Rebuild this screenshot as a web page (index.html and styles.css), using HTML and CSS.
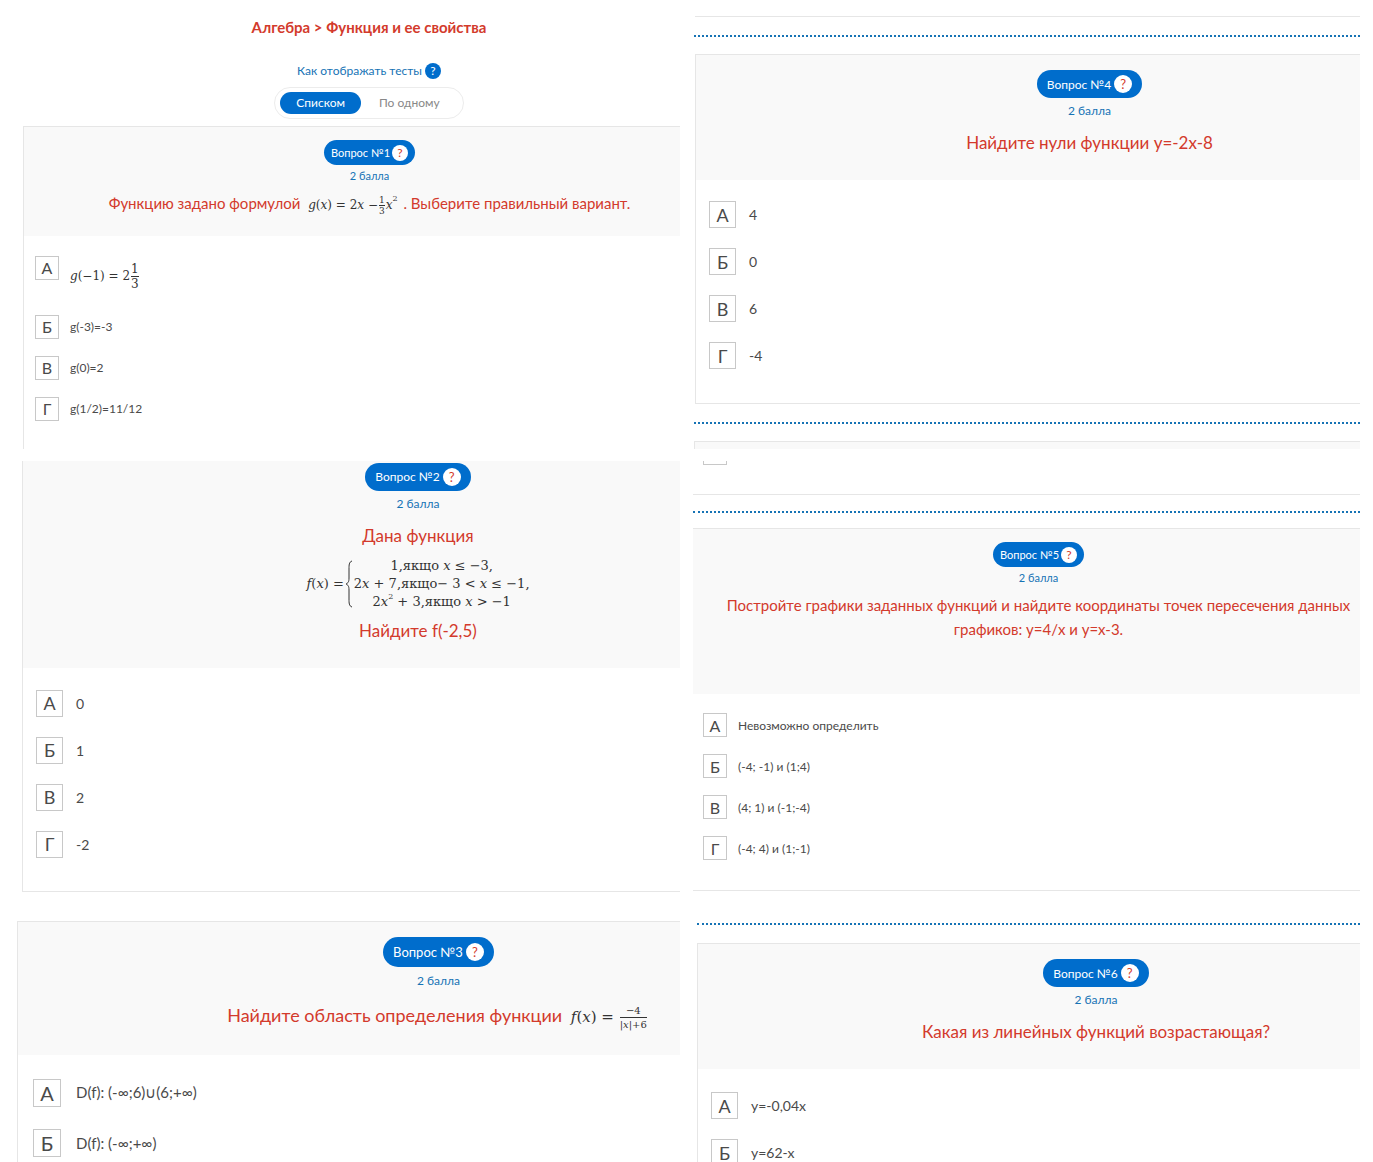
FILE: index.html
```html
<!DOCTYPE html>
<html lang="ru">
<head>
    <meta charset="UTF-8">
    <meta name="viewport" content="width=device-width, initial-scale=1.0">
    <title>Алгебра - Функция и ее свойства</title>
    <link rel="stylesheet" href="styles.css">
</head>
<body>
<main class="page">
    <div class="column">
        <header class="top">
            <h1>Алгебра &gt; Функция и ее свойства</h1>
            <div class="view-label">
                Как отображать тесты
                <button class="help help-blue" type="button">?</button>
            </div>
            <div class="toggle">
                <button class="toggle-item active" type="button">Списком</button>
                <button class="toggle-item" type="button">По одному</button>
            </div>
        </header>

        <section class="question small q1">
            <div class="question-head">
                <div class="badge">Вопрос №1 <button class="help" type="button">?</button></div>
                <div class="points">2 балла</div>
                <h2>Функцию задано формулой
                    <span class="formula"><i>g</i>(<i>x</i>) = 2<i>x</i> −<span class="frac"><span>1</span><span>3</span></span><i>x</i><sup>2</sup></span>
                    . Выберите правильный вариант.</h2>
            </div>
            <div class="answers">
                <button class="answer answer-tall" type="button"><span class="letter">А</span><span class="formula"><i>g</i>(−1) = 2<span class="frac frac-big"><span>1</span><span>3</span></span></span></button>
                <button class="answer" type="button"><span class="letter">Б</span><span>g(-3)=-3</span></button>
                <button class="answer" type="button"><span class="letter">В</span><span>g(0)=2</span></button>
                <button class="answer" type="button"><span class="letter">Г</span><span>g(1/2)=11/12</span></button>
            </div>
        </section>

        <section class="question medium q2">
            <div class="question-head">
                <div class="badge">Вопрос №2 <button class="help" type="button">?</button></div>
                <div class="points">2 балла</div>
                <h2>Дана функция</h2>
                <div class="formula system">
                    <span><i>f</i>(<i>x</i>) =</span>
                    <svg class="brace" viewBox="0 0 8 48" width="8" height="48">
                        <path d="M7 1C4 2 4 5 4 9v9c0 4-1 5-3 6 2 1 3 2 3 6v9c0 4 0 7 3 8"/>
                    </svg>
                    <div class="cases">
                        <span>1,якщо <i>x</i> ≤ −3,</span>
                        <span>2<i>x</i> + 7,якщо− 3 &lt; <i>x</i> ≤ −1,</span>
                        <span>2<i>x</i><sup>2</sup> + 3,якщо <i>x</i> &gt; −1</span>
                    </div>
                </div>
                <h2>Найдите f(-2,5)</h2>
            </div>
            <div class="answers">
                <button class="answer" type="button"><span class="letter">А</span><span>0</span></button>
                <button class="answer" type="button"><span class="letter">Б</span><span>1</span></button>
                <button class="answer" type="button"><span class="letter">В</span><span>2</span></button>
                <button class="answer" type="button"><span class="letter">Г</span><span>-2</span></button>
            </div>
        </section>

        <section class="question large q3">
            <div class="question-head">
                <div class="badge">Вопрос №3 <button class="help" type="button">?</button></div>
                <div class="points">2 балла</div>
                <h2>Найдите область определения функции
                    <span class="formula"><i>f</i>(<i>x</i>) = <span class="frac"><span>−4</span><span>|<i>x</i>|+6</span></span></span></h2>
            </div>
            <div class="answers">
                <button class="answer" type="button"><span class="letter">А</span><span>D(f): (-∞;6)∪(6;+∞)</span></button>
                <button class="answer" type="button"><span class="letter">Б</span><span>D(f): (-∞;+∞)</span></button>
            </div>
        </section>
    </div>

    <div class="column">
        <div class="panel-end"></div>
        <hr class="dots">

        <section class="question medium q4">
            <div class="question-head">
                <div class="badge">Вопрос №4 <button class="help" type="button">?</button></div>
                <div class="points">2 балла</div>
                <h2>Найдите нули функции y=-2x-8</h2>
            </div>
            <div class="answers">
                <button class="answer" type="button"><span class="letter">А</span><span>4</span></button>
                <button class="answer" type="button"><span class="letter">Б</span><span>0</span></button>
                <button class="answer" type="button"><span class="letter">В</span><span>6</span></button>
                <button class="answer" type="button"><span class="letter">Г</span><span>-4</span></button>
            </div>
        </section>

        <hr class="dots">
        <div class="panel-start"></div>
        <div class="panel-tail">
            <div class="letter-end"></div>
        </div>
        <hr class="dots dots-close">

        <section class="question small q5">
            <div class="question-head">
                <div class="badge">Вопрос №5 <button class="help" type="button">?</button></div>
                <div class="points">2 балла</div>
                <h2>Постройте графики заданных функций и найдите координаты точек пересечения данных графиков: y=4/x и y=x-3.</h2>
            </div>
            <div class="answers">
                <button class="answer" type="button"><span class="letter">А</span><span>Невозможно определить</span></button>
                <button class="answer" type="button"><span class="letter">Б</span><span>(-4; -1) и (1;4)</span></button>
                <button class="answer" type="button"><span class="letter">В</span><span>(4; 1) и (-1;-4)</span></button>
                <button class="answer" type="button"><span class="letter">Г</span><span>(-4; 4) и (1;-1)</span></button>
            </div>
        </section>

        <hr class="dots dots-far">

        <section class="question medium q6">
            <div class="question-head">
                <div class="badge">Вопрос №6 <button class="help" type="button">?</button></div>
                <div class="points">2 балла</div>
                <h2>Какая из линейных функций возрастающая?</h2>
            </div>
            <div class="answers">
                <button class="answer" type="button"><span class="letter">А</span><span>y=-0,04x</span></button>
                <button class="answer" type="button"><span class="letter">Б</span><span>y=62-x</span></button>
            </div>
        </section>
    </div>
</main>
</body>
</html>
```

FILE: styles.css
```css
* {
    margin: 0;
    padding: 0;
    box-sizing: border-box;
}

body {
    font-family: Lato, "Noto Sans", sans-serif;
    background: #fff;
    color: #4a4a4a;
    height: 100vh;
    overflow: hidden;
}

button {
    font: inherit;
    color: inherit;
    background: none;
    border: none;
    cursor: pointer;
}

.page {
    display: grid;
    grid-template-columns: 663fr 667fr;
    gap: 13px;
    padding: 0 13px 0 17px;
}

.column {
    min-width: 0;
}

/* Шапка */
.top {
    display: flex;
    flex-direction: column;
    align-items: center;
    height: 126px;
    padding: 15px 0 0 41px;
}

.top h1 {
    font-size: 15px;
    line-height: 24px;
    color: #d33a2c;
    margin-bottom: 22px;
}

.view-label {
    display: flex;
    align-items: center;
    gap: 3px;
    font-size: 12px;
    line-height: 20px;
    color: #1673b5;
    margin-bottom: 6px;
}

.toggle {
    display: flex;
    align-items: center;
    height: 32px;
    padding: 0 5px;
    border: 1px solid #ececec;
    border-radius: 16px;
}

.toggle-item {
    height: 22px;
    padding: 0 16px;
    border-radius: 11px;
    font-size: 12px;
    line-height: 20px;
    color: #888;
}

.toggle-item.active {
    background: #006dcc;
    color: #fff;
}

.toggle-item + .toggle-item {
    padding: 0 18px;
}

.help {
    width: 16px;
    height: 16px;
    border-radius: 50%;
    background: #fff;
    color: #d33a2c;
    font-size: 12px;
    line-height: 16px;
    text-align: center;
}

.help-blue {
    background: #006dcc;
    color: #fff;
}

/* Вопросы */
.question {
    border: 1px solid #e6e6e6;
    border-right: none;
}

.question-head {
    background: #f9f9f9;
    text-align: center;
}

.badge {
    display: flex;
    align-items: center;
    gap: 3px;
    width: fit-content;
    margin: 0 auto;
    padding: 0 10px;
    border-radius: 15px;
    background: #006dcc;
    color: #fff;
    white-space: nowrap;
}

.points {
    color: #1673b5;
}

.question h2 {
    font-weight: normal;
    color: #d33a2c;
}

.answers {
    display: flex;
    flex-direction: column;
    align-items: flex-start;
}

.answer {
    display: flex;
    align-items: center;
    text-align: left;
}

.letter {
    display: flex;
    align-items: center;
    justify-content: center;
    flex-shrink: 0;
    border: 1px solid #c8c8c8;
}

/* Мелкий размер */
.small .question-head {
    padding-top: 13px;
    padding-bottom: 20px;
}

.small .badge {
    height: 25px;
    gap: 2px;
    padding: 0 7px;
    font-size: 11px;
}

.small .points {
    margin-top: 1px;
    font-size: 11px;
    line-height: 20px;
}

.small h2 {
    margin-top: 5px;
    font-size: 15px;
    line-height: 24px;
}

.small .answers {
    gap: 17px;
    padding: 20px 11px 28px;
}

.small .answer {
    gap: 11px;
    font-size: 12px;
}

.small .letter {
    width: 24px;
    height: 24px;
    font-size: 16px;
}

/* Средний размер */
.medium .question-head {
    padding-top: 15px;
    padding-bottom: 23px;
}

.medium .badge {
    height: 28px;
    font-size: 12px;
}

.medium .help,
.large .help {
    width: 18px;
    height: 18px;
    font-size: 13px;
    line-height: 18px;
}

.medium .points {
    margin-top: 2px;
    font-size: 12px;
    line-height: 22px;
}

.medium h2 {
    margin-top: 7px;
    font-size: 17px;
    line-height: 28px;
}

.medium .answers {
    gap: 20px;
    padding: 21px 13px 34px;
}

.medium .answer {
    gap: 13px;
    font-size: 14px;
}

.medium .letter {
    width: 27px;
    height: 27px;
    font-size: 18px;
}

/* Крупный размер */
.large .question-head {
    padding-top: 15px;
    padding-bottom: 24px;
}

.large .badge {
    height: 30px;
    font-size: 13px;
}

.large .points {
    margin-top: 2px;
    font-size: 12px;
    line-height: 24px;
}

.large h2 {
    margin-top: 7px;
    font-size: 18px;
    line-height: 30px;
}

.large .answers {
    gap: 22px;
    padding: 24px 15px;
}

.large .answer {
    gap: 15px;
    font-size: 15px;
}

.large .letter {
    width: 28px;
    height: 28px;
    font-size: 20px;
}

/* Формулы */
.formula {
    display: inline-flex;
    align-items: center;
    font-family: "DejaVu Serif", serif;
    font-size: 12px;
    line-height: 16px;
    color: #333;
    white-space: pre;
}

h2 .formula {
    margin: 0 2px 0 4px;
    vertical-align: middle;
}

.large .formula {
    font-size: 15px;
}

.formula sup {
    font-size: 8px;
    line-height: 8px;
    align-self: flex-start;
}

.frac {
    display: inline-flex;
    flex-direction: column;
    align-items: center;
    margin: 0 1px;
    font-size: 9px;
    line-height: 10px;
}

.large .frac {
    font-size: 10px;
    line-height: 13px;
}

.frac span:first-child {
    align-self: stretch;
    text-align: center;
    border-bottom: 1px solid #333;
}

.frac-big {
    font-size: 12px;
    line-height: 14px;
}

.system {
    display: flex;
    justify-content: center;
    gap: 1px;
    margin-top: 7px;
    font-size: 13px;
}

.cases {
    display: flex;
    flex-direction: column;
    align-items: center;
    line-height: 18px;
}

.cases sup {
    vertical-align: top;
}

.brace {
    fill: none;
    stroke: #333;
}

.medium .system + h2 {
    margin-top: 6px;
}

/* Положение отдельных вопросов */
.q1 {
    margin-left: 6px;
    border-bottom: none;
}

.q1 .question-head {
    padding-left: 35px;
}

.q1 .answer-tall {
    align-items: flex-start;
    height: 42px;
}

.answer-tall .formula {
    margin-top: 6px;
}

.q2 {
    margin: 12px 0 29px 5px;
    border-top: none;
}

.q2 .question-head {
    padding-top: 2px;
    padding-left: 133px;
}

.medium.q2 .answers {
    padding-top: 22px;
    padding-bottom: 33px;
}

.q3 .question-head {
    padding-left: 179px;
}

.q4 {
    margin-left: 2px;
}

.q4 .question-head {
    padding-left: 123px;
}

.q5 {
    border-left: none;
}

.q5 .question-head {
    padding-left: 24px;
    padding-bottom: 53px;
}

.small.q5 .answers {
    padding: 19px 10px 30px;
}

.q6 {
    margin-left: 4px;
}

.q6 .question-head {
    padding-left: 134px;
}

.medium.q6 .answers {
    padding-top: 23px;
}

/* Разделители и края соседних карточек */
.dots {
    border: none;
    border-top: 2px dotted #1673b5;
    margin: 18px 0 17px 1px;
}

.dots-close {
    margin: 16px 0 15px;
}

.dots-far {
    margin: 32px 0 18px 4px;
}

.panel-end {
    height: 17px;
    margin-left: 2px;
    border-bottom: 1px solid #e6e6e6;
}

.panel-start {
    height: 8px;
    margin-left: 1px;
    background: #f9f9f9;
    border-top: 1px solid #e6e6e6;
    border-left: 1px solid #e6e6e6;
}

.panel-tail {
    height: 46px;
    padding: 12px 10px 0;
    border-bottom: 1px solid #e6e6e6;
}

.letter-end {
    width: 24px;
    height: 4px;
    border: 1px solid #c8c8c8;
    border-top: none;
}
```
